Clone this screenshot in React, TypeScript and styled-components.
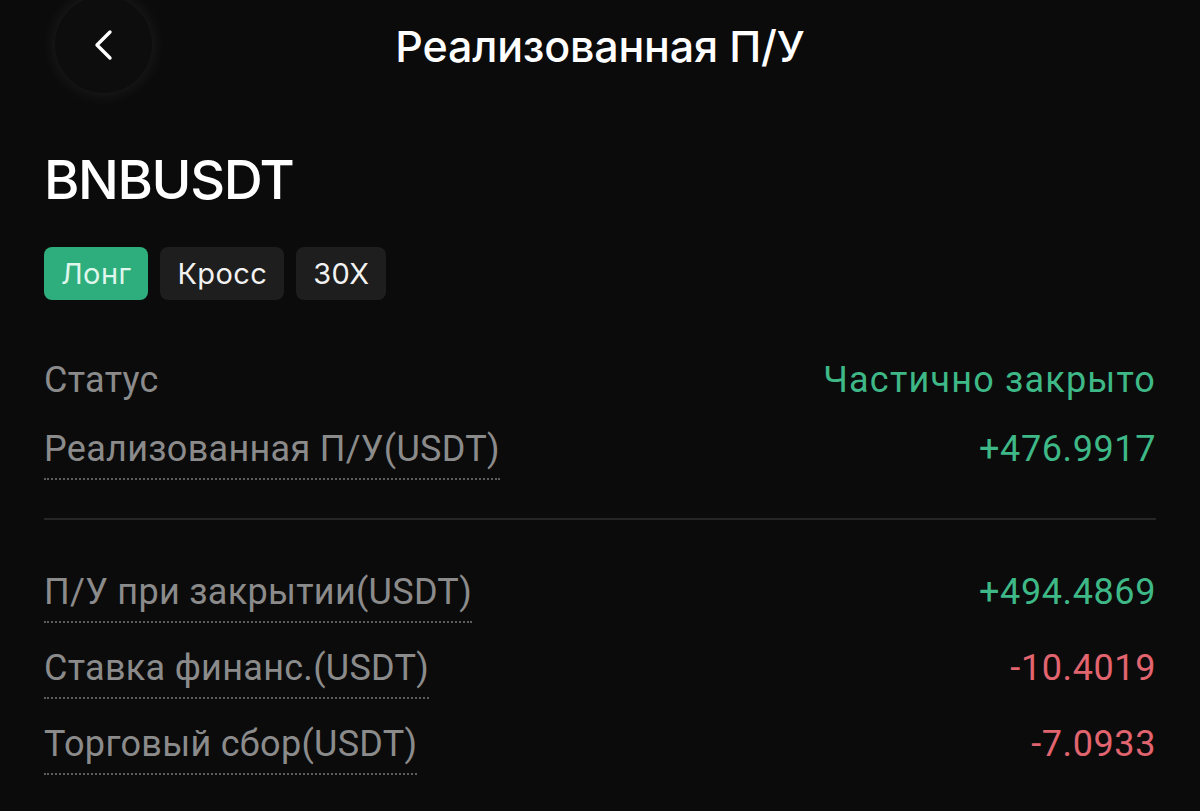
import React from 'react';
import styled, { createGlobalStyle } from 'styled-components';

const GlobalStyle = createGlobalStyle`
  html, body {
    margin: 0;
    padding: 0;
    background: #0b0b0b;
  }
  * {
    box-sizing: border-box;
  }
`;

const Page = styled.div`
  width: 1200px;
  height: 811px;
  overflow: hidden;
  background: #0b0b0b;
  padding: 0 44px;
  color: #fff;
  font-family: Inter, "Noto Sans", sans-serif;
`;

const Header = styled.header`
  position: relative;
  height: 90px;
  display: flex;
  align-items: center;
  justify-content: center;
`;

const BackButton = styled.button`
  position: absolute;
  left: 11px;
  top: -4px;
  width: 97px;
  height: 97px;
  border-radius: 50%;
  border: none;
  background: #0d0d0d;
  box-shadow: 0 0 18px rgba(255, 255, 255, 0.09);
  display: flex;
  align-items: center;
  justify-content: center;
  padding: 0;
  cursor: pointer;
`;

const HeaderTitle = styled.h1`
  margin: 0;
  font-size: 43px;
  font-weight: 500;
  line-height: 1;
  letter-spacing: -0.2px;
  padding-top: 2px;
`;

const Symbol = styled.div`
  margin-top: 62px;
  font-size: 54px;
  font-weight: 500;
  line-height: 55px;
  letter-spacing: -1.4px;
`;

const Tags = styled.div`
  display: flex;
  gap: 12px;
  margin-top: 40px;
`;

const Tag = styled.span<{ $accent?: boolean }>`
  height: 53px;
  padding: 0 17px;
  border-radius: 8px;
  display: flex;
  align-items: center;
  font-size: 29px;
  font-weight: 400;
  letter-spacing: 0.4px;
  background: ${p => (p.$accent ? '#2fae7d' : '#1e1e1e')};
  color: ${p => (p.$accent ? '#dff6ec' : '#f2f2f2')};
`;

const Details = styled.section<{ $top: number }>`
  display: flex;
  flex-direction: column;
  gap: 24px;
  margin-top: ${p => p.$top}px;
  font-family: Roboto, "Liberation Sans", sans-serif;
`;

const Row = styled.div<{ $nudge?: number }>`
  display: flex;
  justify-content: space-between;
  align-items: flex-start;
  margin-top: ${p => p.$nudge ?? 0}px;
  font-size: 36px;
  line-height: 42px;
  letter-spacing: 0.3px;
`;

const Label = styled.span<{ $dotted?: boolean }>`
  color: #8b8b8b;
  padding-bottom: ${p => (p.$dotted ? '8px' : '0')};
  border-bottom: ${p => (p.$dotted ? '2px dotted #5e5e5e' : 'none')};
`;

const Value = styled.span<{ $tone: 'up' | 'down'; $wide?: boolean }>`
  color: ${p => (p.$tone === 'up' ? '#3eb887' : '#e1646f')};
  letter-spacing: ${p => (p.$wide ? '1.2px' : '0.6px')};
`;

const Divider = styled.hr`
  margin: 38px 0 0;
  border: none;
  height: 2px;
  background: #262626;
`;

const ChevronLeft = () => (
  <svg width="22" height="32" viewBox="0 0 22 32" fill="none">
    <path d="M17 3 L4 16 L17 29" stroke="#fff" strokeWidth="3.4" strokeLinecap="round" strokeLinejoin="round" />
  </svg>
);

const closeRows: { label: string; value: string; tone: 'up' | 'down' }[] = [
  { label: 'П/У при закрытии(USDT)', value: '+494.4869', tone: 'up' },
  { label: 'Ставка финанс.(USDT)', value: '-10.4019', tone: 'down' },
  { label: 'Торговый сбор(USDT)', value: '-7.0933', tone: 'down' },
];

const App: React.FC = () => {
  return (
    <Page>
      <GlobalStyle />
      <Header>
        <BackButton aria-label="Назад">
          <ChevronLeft />
        </BackButton>
        <HeaderTitle>Реализованная П/У</HeaderTitle>
      </Header>

      <Symbol>BNBUSDT</Symbol>

      <Tags>
        <Tag $accent>Лонг</Tag>
        <Tag>Кросс</Tag>
        <Tag>30X</Tag>
      </Tags>

      <Details $top={59}>
        <Row>
          <Label>Статус</Label>
          <Value $tone="up" $wide>Частично закрыто</Value>
        </Row>
        <Row $nudge={3}>
          <Label $dotted>Реализованная П/У(USDT)</Label>
          <Value $tone="up">+476.9917</Value>
        </Row>
      </Details>

      <Divider />

      <Details $top={51}>
        {closeRows.map(r => (
          <Row key={r.label}>
            <Label $dotted>{r.label}</Label>
            <Value $tone={r.tone}>{r.value}</Value>
          </Row>
        ))}
      </Details>
    </Page>
  );
};

export default App;
